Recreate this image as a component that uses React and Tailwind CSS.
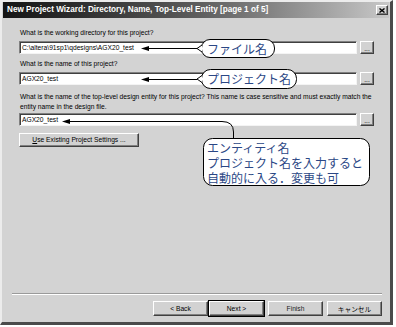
export default function App() {
  const raised =
    "border border-t-white border-l-white border-r-[#404040] border-b-[#404040] shadow-[inset_-1px_-1px_0_#808080] bg-[#d2d2d2]";
  const sunken =
    "bg-white border border-t-[#808080] border-l-[#808080] border-r-[#f4f4f4] border-b-[#f4f4f4] shadow-[inset_1px_1px_0_#404040]";
  const lbl = "text-[6.7px] leading-[10px] text-black ml-px whitespace-nowrap";
  const bubbleText =
    "absolute font-['Noto_Sans_CJK_JP','Noto_Sans_CJK_SC',sans-serif] text-[12px] leading-[15px] text-[#2b4785] whitespace-nowrap";
  const bubbleLine = "h-[15px] leading-[15px]";

  const InputRow = ({ value, top }) => (
    <div className={`flex items-center gap-[3px] ${top}`}>
      <div className={`w-[338px] h-[13px] flex items-center px-[2px] ${sunken}`}>
        <span className="text-[6.7px] leading-[10px] text-black whitespace-nowrap">{value}</span>
      </div>
      <div className={`w-[14px] h-[13px] flex items-end justify-center pb-[1px] ${raised}`}>
        <span className="text-[6.7px] leading-[7px] text-black">...</span>
      </div>
    </div>
  );

  return (
    <div className="w-[396px] h-[327px] bg-white font-['Liberation_Sans',Arial,sans-serif] overflow-hidden">
      <div className="relative w-[393px] h-[325px] flex flex-col bg-[#d3d3d3] border-t-2 border-l-2 border-t-[#ececec] border-l-[#ececec] border-r-[3px] border-b-[3px] border-r-[#4a4a4a] border-b-[#4a4a4a]">
        {/* title bar */}
        <div className="mx-px h-[16px] flex items-center justify-between pl-[4px] pr-[1px] bg-linear-to-r from-[#141414] via-[#5c5c5c] to-[#c8c8c8]">
          <span className="text-white font-bold text-[8.2px] leading-[10px] whitespace-nowrap">
            New Project Wizard: Directory, Name, Top-Level Entity [page 1 of 5]
          </span>
          <div className={`w-[12px] h-[10px] flex items-center justify-center ${raised}`}>
            <svg width="6" height="5" viewBox="0 0 6 5">
              <path d="M0.5 0.5 L5.5 4.5 M5.5 0.5 L0.5 4.5" stroke="black" strokeWidth="1.4" />
            </svg>
          </div>
        </div>

        {/* body */}
        <div className="flex-1 flex flex-col pl-[17px]">
          <div className={`${lbl} mt-[10px]`}>What is the working directory for this project?</div>
          <InputRow value="C:\altera\91sp1\qdesigns\AGX20_test" top="mt-[3px]" />
          <div className={`${lbl} mt-[5px]`}>What is the name of this project?</div>
          <InputRow value="AGX20_test" top="mt-[3px]" />
          <div className={`${lbl} mt-[7px]`}>
            What is the name of the top-level design entity for this project? This name is case sensitive and must exactly match the
            <br />
            entity name in the design file.
          </div>
          <InputRow value="AGX20_test" top="mt-px" />
          <div className={`mt-[7px] w-[120px] h-[14px] flex items-center justify-center ${raised}`}>
            <span className="text-[6.7px] leading-[10px] text-black whitespace-nowrap">
              <span className="underline">U</span>se Existing Project Settings ...
            </span>
          </div>
        </div>

        {/* footer */}
        <div className="ml-[10px] mr-[8px] h-[2px] border-t border-t-[#9a9a9a] border-b border-b-white" />
        <div className="flex justify-end pr-[8px] mt-[6px] mb-[6px]">
          <div className={`w-[55px] h-[15px] flex items-center justify-center ${raised}`}>
            <span className="text-[6.7px] leading-[10px] text-black">&lt; Back</span>
          </div>
          <div className={`ml-px w-[55px] h-[15px] flex items-center justify-center ring-1 ring-black ${raised}`}>
            <span className="text-[6.7px] leading-[10px] text-black">Next &gt;</span>
          </div>
          <div className={`ml-[4px] w-[55px] h-[15px] flex items-center justify-center ${raised}`}>
            <span className="text-[6.7px] leading-[10px] text-[#222]">Finish</span>
          </div>
          <div className={`ml-[4px] w-[55px] h-[15px] flex items-center justify-center ${raised}`}>
            <span className="text-[6.7px] leading-[10px] text-black font-['Noto_Sans_CJK_JP',sans-serif]">キャンセル</span>
          </div>
        </div>

        {/* callouts overlay */}
        <div className="absolute left-[-2px] top-[-2px] w-[396px] h-[327px] pointer-events-none">
          <svg width="396" height="327" className="absolute left-0 top-0">
            {/* bubble 1 */}
            <rect x="201.5" y="39.5" width="73" height="18" rx="8.5" fill="white" stroke="black" />
            <path d="M202 45 L197 48.5 L202 52" fill="white" stroke="black" />
            <line x1="147" y1="48.5" x2="197" y2="48.5" stroke="black" />
            <path d="M141 48.5 L149 46 L149 51 Z" fill="black" />
            {/* bubble 2 */}
            <rect x="201.5" y="69.5" width="95" height="19" rx="9" fill="white" stroke="black" />
            <path d="M202 75.5 L197 79 L202 82.5" fill="white" stroke="black" />
            <line x1="147" y1="79.5" x2="197" y2="79.5" stroke="black" />
            <path d="M141 79.5 L149 77 L149 82 Z" fill="black" />
            {/* bubble 3 */}
            <rect x="203.5" y="138.5" width="166" height="47" rx="9" fill="white" stroke="black" />
            <path d="M67 121.5 H222 Q233.5 121.5 233.5 132 V138.5" fill="none" stroke="black" />
            <path d="M62 121.5 L70 119 L70 124 Z" fill="black" />
          </svg>
          <div className={`${bubbleText} left-[207px] top-[41px]`}>ファイル名</div>
          <div className={`${bubbleText} left-[207px] top-[71px]`}>プロジェクト名</div>
          <div className={`${bubbleText} left-[207px] top-[140px] flex flex-col`}>
            <div className={bubbleLine}>エンティティ名</div>
            <div className={bubbleLine}>プロジェクト名を入力すると</div>
            <div className={bubbleLine}>自動的に入る．変更も可</div>
          </div>
        </div>
      </div>
    </div>
  );
}
